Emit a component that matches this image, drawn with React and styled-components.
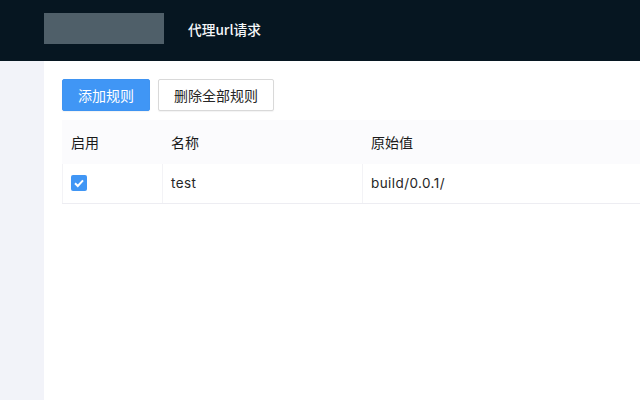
import React from "react";
import styled, { createGlobalStyle } from "styled-components";

const Global = createGlobalStyle`
  html, body { margin: 0; padding: 0; }
  body { font-family: Inter, "Noto Sans CJK SC", sans-serif; overflow: hidden; }
`;
const Page = styled.div`
  width: 640px; height: 400px; display: flex; flex-direction: column; overflow: hidden; background: #f0f2f5;
`;
const Header = styled.header`
  height: 61px; flex: none; background: #061621; display: flex; align-items: center; padding-left: 44px; box-sizing: border-box;
`;
const Logo = styled.div`
  width: 120px; height: 31px; background: #4f5f69; margin-top: -4px;
`;
const Title = styled.div`
  margin-left: 24px; margin-top: -3px; color: #f5f7f9; font-size: 13.7px; font-weight: 500;
  font-family: "Noto Sans CJK SC", sans-serif;
`;
const Body = styled.div`
  flex: 1; display: flex; min-height: 0;
`;
const Side = styled.aside`
  width: 44px; flex: none; background: #f2f3f9;
`;
const Main = styled.main`
  flex: 1; min-width: 0; background: #fff; padding: 18px 0 0 18px; box-sizing: border-box;
`;
const Actions = styled.div`
  display: flex; gap: 8px; margin-bottom: 9px;
`;
const Button = styled.button`
  height: 32px; padding: 0 15px; border-radius: 2px; font-size: 14px; line-height: 1;
  font-family: "Noto Sans CJK SC", sans-serif; letter-spacing: 0;
  border: 1px solid ${p => (p.$primary ? "#3f94f2" : "#d9d9d9")};
  background: ${p => (p.$primary ? "#4096f5" : "#fff")};
  color: ${p => (p.$primary ? "#fff" : "#262626")};
  box-shadow: 0 1px 1px rgba(0,0,0,.05);
`;
const Table = styled.div`
  width: 640px;
`;
const Row = styled.div`
  display: grid; grid-template-columns: 100px 200px 1fr;
  height: ${p => (p.$head ? "44px" : "39px")};
  background: ${p => (p.$head ? "#fbfbfd" : "#fff")};
  border-bottom: ${p => (p.$head ? "0" : "1px solid #ededf2")};
  box-sizing: content-box;
`;
const HeadCell = styled.div`
  display: flex; align-items: center; padding: 0 0 1px 9px; font-size: 14px; color: #1a1a1a; font-weight: 400;
  font-family: "Noto Sans CJK SC", sans-serif;
`;
const Cell = styled.div`
  display: flex; align-items: center; padding: 0 0 2px 8px; font-size: 13.5px; letter-spacing: .42px; color: #262626;
  border-left: 1px solid #f3f3f6;
`;
const Check = styled.span`
  width: 16px; height: 16px; border-radius: 2px; background: #4096f5; display: flex; align-items: center; justify-content: center;
`;

export default function App() {
  return (
    <Page>
      <Global />
      <Header>
        <Logo />
        <Title>代理url请求</Title>
      </Header>
      <Body>
        <Side />
        <Main>
          <Actions>
            <Button $primary>添加规则</Button>
            <Button>删除全部规则</Button>
          </Actions>
          <Table>
            <Row $head>
              <HeadCell>启用</HeadCell>
              <HeadCell>名称</HeadCell>
              <HeadCell>原始值</HeadCell>
            </Row>
            <Row>
              <Cell>
                <Check>
                  <svg width="12" height="12" viewBox="0 0 12 12" fill="none">
                    <path d="M2 6.2 L4.8 9 L10 3.4" stroke="#fff" strokeWidth="2" />
                  </svg>
                </Check>
              </Cell>
              <Cell>test</Cell>
              <Cell>build/0.0.1/</Cell>
            </Row>
          </Table>
        </Main>
      </Body>
    </Page>
  );
}
